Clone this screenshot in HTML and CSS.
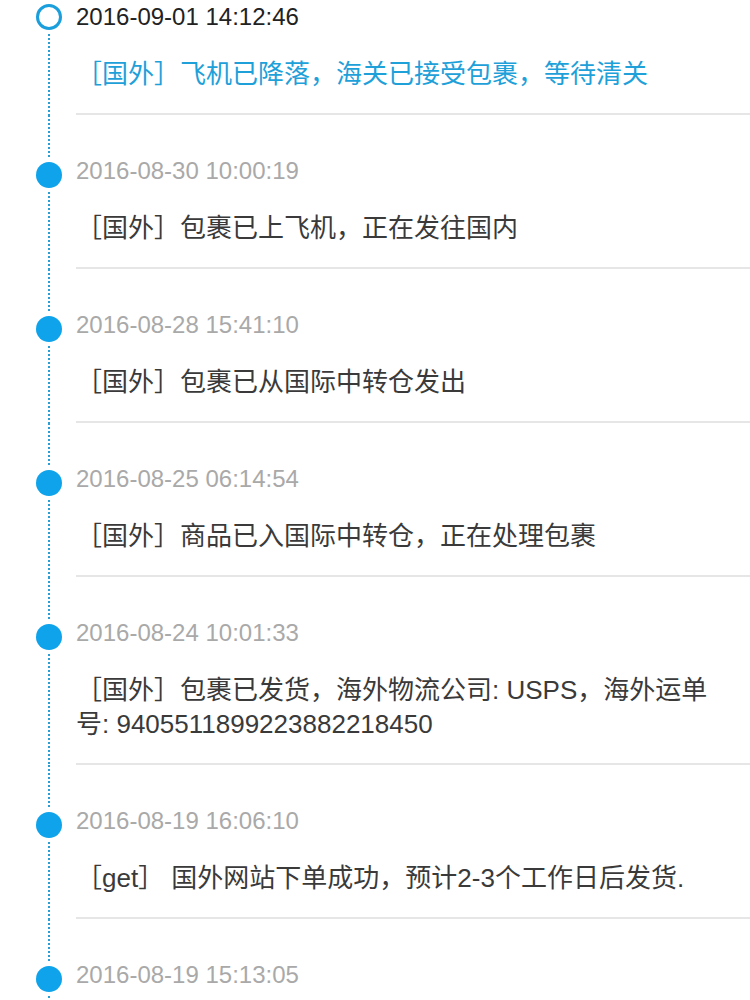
FILE: index.html
```html
<!DOCTYPE html>
<html lang="zh-CN">
<head>
<meta charset="utf-8">
<title>物流详情</title>
<link rel="stylesheet" href="styles.css">
</head>
<body>
<ul class="timeline">
  <li class="event event--current">
    <div class="rail"><span class="node node--ring"></span><span class="rail-line"></span></div>
    <div class="body">
      <p class="time">2016-09-01 14:12:46</p>
      <p class="desc">［国外］飞机已降落，海关已接受包裹，等待清关</p>
    </div>
  </li>
  <li class="event">
    <div class="rail"><span class="rail-line rail-line--top"></span><span class="node"></span><span class="rail-line"></span></div>
    <div class="body">
      <p class="time">2016-08-30 10:00:19</p>
      <p class="desc">［国外］包裹已上飞机，正在发往国内</p>
    </div>
  </li>
  <li class="event">
    <div class="rail"><span class="rail-line rail-line--top"></span><span class="node"></span><span class="rail-line"></span></div>
    <div class="body">
      <p class="time">2016-08-28 15:41:10</p>
      <p class="desc">［国外］包裹已从国际中转仓发出</p>
    </div>
  </li>
  <li class="event">
    <div class="rail"><span class="rail-line rail-line--top"></span><span class="node"></span><span class="rail-line"></span></div>
    <div class="body">
      <p class="time">2016-08-25 06:14:54</p>
      <p class="desc">［国外］商品已入国际中转仓，正在处理包裹</p>
    </div>
  </li>
  <li class="event">
    <div class="rail"><span class="rail-line rail-line--top"></span><span class="node"></span><span class="rail-line"></span></div>
    <div class="body">
      <p class="time">2016-08-24 10:01:33</p>
      <p class="desc">［国外］包裹已发货，海外物流公司: USPS，海外运单号: 9405511899223882218450</p>
    </div>
  </li>
  <li class="event">
    <div class="rail"><span class="rail-line rail-line--top"></span><span class="node"></span><span class="rail-line"></span></div>
    <div class="body">
      <p class="time">2016-08-19 16:06:10</p>
      <p class="desc">［get］ 国外网站下单成功，预计2-3个工作日后发货.</p>
    </div>
  </li>
  <li class="event event--last">
    <div class="rail"><span class="rail-line rail-line--top"></span><span class="node"></span><span class="rail-line"></span></div>
    <div class="body">
      <p class="time">2016-08-19 15:13:05</p>
    </div>
  </li>
</ul>
</body>
</html>
```
FILE: styles.css
```css
html, body {
  margin: 0;
  padding: 0;
  background: #ffffff;
}

body {
  font-family: "Liberation Sans", "Noto Sans CJK SC", sans-serif;
  -webkit-font-smoothing: antialiased;
}

.timeline {
  list-style: none;
  margin: 0;
  padding: 0;
}

.event {
  display: grid;
  grid-template-columns: 76px 1fr;
}

.rail {
  display: flex;
  flex-direction: column;
}

.rail-line {
  flex: 1;
  width: 2px;
  margin-left: 48px;
  background: repeating-linear-gradient(to bottom, #2a9fd6 0 2px, transparent 2px 4px);
}

.rail-line--top {
  flex: none;
  height: 43px;
}

.node {
  flex: none;
  width: 26px;
  height: 26px;
  margin: 4px 0 4px 36px;
  border-radius: 50%;
  background: #0ea3ea;
}

.node--ring {
  box-sizing: border-box;
  border: 3px solid #1a9fdc;
  background: #ffffff;
}

.body {
  padding: 39px 30px 0 0;
  border-bottom: 2px solid #e6e6e6;
}

.event--current .body {
  padding-top: 0;
}

.event--last .body {
  border-bottom: none;
  min-height: 120px;
}

.time {
  margin: 0;
  font-size: 24px;
  line-height: 34px;
  color: #a9a9a9;
}

.desc {
  margin: 23px 0 0;
  padding-bottom: 22px;
  font-size: 26px;
  line-height: 34px;
  color: #3a3a3a;
}

.event--current .time {
  color: #222222;
}

.event--current .desc {
  color: #1ea0d9;
}
```
